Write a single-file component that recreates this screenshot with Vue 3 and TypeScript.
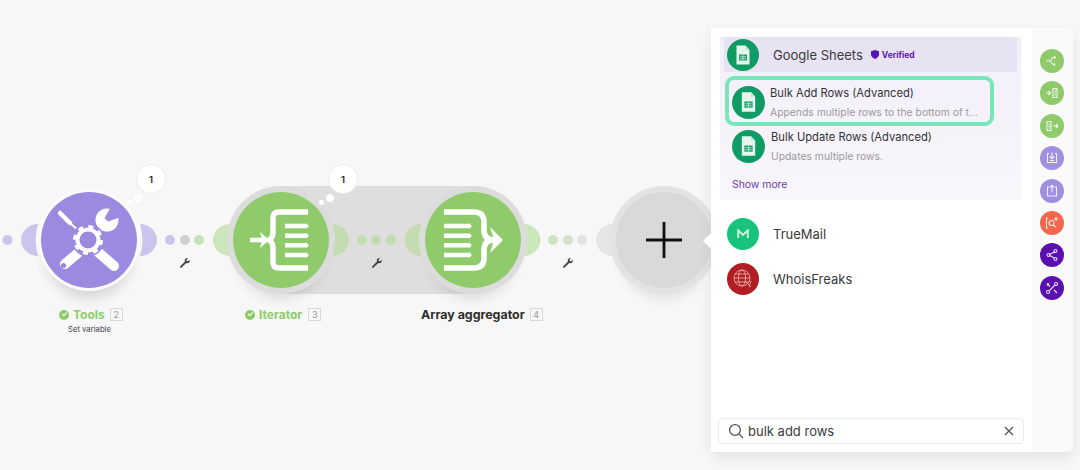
<template>
  <div class="page">
    <div class="band"></div>

    <svg class="links" width="710" height="470" viewBox="0 0 710 470">
      <path
        v-for="w in wings"
        :key="w.x + w.side"
        :d="wingPath(w.x, w.side)"
        :fill="w.color"
      />
      <circle v-for="d in dots" :key="d.x" :cx="d.x" cy="240" r="5" :fill="d.color" />
      <g v-for="x in wrenchXs" :key="x" :transform="`translate(${x - 5.500} 257.500)`" fill="#444">
        <path d="M1 11.2 7 5.2a3.2 3.2 0 0 1 .6-3.6A3.3 3.3 0 0 1 11 .8L9 2.8l.3 1.8 1.8.3 2-2a3.3 3.3 0 0 1-.8 3.4 3.2 3.2 0 0 1-3.6.6l-6 6a1.2 1.2 0 0 1-1.7-1.7Z" transform="scale(.78)" />
      </g>
    </svg>

    <div class="node tools">
      <svg width="96" height="96" viewBox="0 0 96 96">
        <g fill="none" stroke="#fff" stroke-linecap="round">
          <path d="M19 21l10 10" stroke-width="4.500" />
          <path d="M29 31l10 9" stroke-width="2" />
          <path d="M57 60l16 14" stroke-width="10" />
          <path d="M37 61 24 72" stroke-width="10" />
          <path d="M57 38l8-9" stroke-width="7" />
        </g>
        <circle cx="66" cy="28" r="11.500" fill="#fff" />
        <polygon points="63.500,26 67,29.500 80,25 71,13" fill="#9c8ae0" />
        <circle cx="22.500" cy="73.500" r="2.600" fill="#9c8ae0" />
        <circle cx="47" cy="48" r="16.500" fill="#9c8ae0" />
        <circle cx="47" cy="48" r="10.500" fill="none" stroke="#fff" stroke-width="4" />
        <circle cx="47" cy="48" r="13.500" fill="none" stroke="#fff" stroke-width="3" stroke-dasharray="5 5.600" />
      </svg>
    </div>
    <div class="node halo iterator">
      <svg width="96" height="96" viewBox="0 0 96 96">
        <g fill="none" stroke="#fff">
          <path d="M75 20H46q-6 0-6 6v14q0 6-4 8 4 2 4 8v14q0 6 6 6h29" stroke-width="5.500" />
          <path d="M52 34h21M52 43.700h21M52 53.300h21M52 63h21" stroke-width="4.500" />
          <path d="M17 48h13" stroke-width="4.500" />
        </g>
        <polygon points="27,40 36,48 27,56 29,48" fill="#fff" />
        <path d="M73 31l3 3-3 3ZM73 40.700l3 3-3 3ZM73 50.300l3 3-3 3ZM73 60l3 3-3 3Z" fill="#fff" />
      </svg>
    </div>
    <div class="node halo aggregator">
      <svg width="96" height="96" viewBox="0 0 96 96">
        <g fill="none" stroke="#fff">
          <path d="M19 20h30q10 0 10 10v8q0 10 10 10M19 76h30q10 0 10-10v-8q0-10 10-10" stroke-width="5.500" />
          <path d="M19 34h25M19 43.700h25M19 53.300h25M19 63h25" stroke-width="4.500" />
        </g>
        <polygon points="65,35 78,48 65,61 69,48" fill="#fff" />
        <path d="M44 31l3 3-3 3ZM44 40.700l3 3-3 3ZM44 50.300l3 3-3 3ZM44 60l3 3-3 3Z" fill="#fff" />
      </svg>
    </div>
    <div class="node plus-node">
      <svg width="36" height="36" viewBox="0 0 36 36">
        <path d="M18 0v36M0 18h36" stroke="#111" stroke-width="2.800" />
      </svg>
    </div>

    <div v-for="b in bubbles" :key="b" class="bubble-group" :style="{ left: b + 'px' }">
      <span class="puff small"></span>
      <span class="puff mid"></span>
      <span class="bubble">1</span>
    </div>

    <div class="label tools-label">
      <span class="check"></span><span class="name green">Tools</span><span class="badge">2</span>
    </div>
    <div class="sublabel">Set variable</div>
    <div class="label iterator-label">
      <span class="check"></span><span class="name green">Iterator</span><span class="badge">3</span>
    </div>
    <div class="label aggregator-label">
      <span class="name dark">Array aggregator</span><span class="badge">4</span>
    </div>

    <aside class="panel">
      <div class="panel-main">
        <span class="pointer"></span>
        <section class="group">
          <div class="group-head">
            <span class="app-icon sheets big">
              <svg width="32" height="32" viewBox="0 0 32 32">
                <path d="M9.500 6.500h9l4 4.500v14.500h-13Z" fill="#e6f6ee" />
                <path d="M18.500 6.500v4.500h4Z" fill="#bfe6d2" />
                <path d="M12 15.500h8v6h-8Z" fill="#1b9d68" />
                <path d="M12.800 17.700h6.400M12.800 19.700h6.400M16 16v5.200" stroke="#d8f1e4" stroke-width=".7" />
              </svg>
            </span>
            <span class="app-name">Google Sheets</span>
            <svg class="shield" width="8" height="9" viewBox="0 0 8 9">
              <path d="M4 0l4 1.200v3C8 6.600 6 8.200 4 9 2 8.200 0 6.600 0 4.200v-3Z" fill="#5a14b4" />
            </svg>
            <span class="verified">Verified</span>
          </div>
          <div v-for="m in modules" :key="m.title" class="module" :class="{ selected: m.selected }">
            <span class="app-icon sheets">
              <svg width="34" height="34" viewBox="0 0 32 32">
                <path d="M9.500 6.500h9l4 4.500v14.500h-13Z" fill="#e6f6ee" />
                <path d="M18.500 6.500v4.500h4Z" fill="#bfe6d2" />
                <path d="M12 15.500h8v6h-8Z" fill="#1b9d68" />
                <path d="M12.800 17.700h6.400M12.800 19.700h6.400M16 16v5.200" stroke="#d8f1e4" stroke-width=".7" />
              </svg>
            </span>
            <div class="module-text">
              <div class="module-title">{{ m.title }}</div>
              <div class="module-sub">{{ m.sub }}</div>
            </div>
          </div>
          <a class="show-more">Show more</a>
        </section>

        <div class="app-row">
          <span class="app-icon truemail">
            <svg width="12" height="10" viewBox="0 0 12 10">
              <path d="M1.200 9V1.400L6 6l4.800-4.600V9" fill="none" stroke="#d8f7e8" stroke-width="1.900" />
            </svg>
          </span>
          <span class="app-name">TrueMail</span>
        </div>
        <div class="app-row">
          <span class="app-icon whois">
            <svg width="24" height="24" viewBox="0 0 24 24" fill="none" stroke="#f0b9b4" stroke-width=".8">
              <circle cx="11" cy="11" r="8" />
              <ellipse cx="11" cy="11" rx="3.600" ry="8" />
              <path d="M3 11h16M4.200 7h13.600M4.200 15h13.600M14 14l6 6M20 14l-2 6" />
            </svg>
          </span>
          <span class="app-name">WhoisFreaks</span>
        </div>

        <div class="search">
          <svg width="16" height="16" viewBox="0 0 16 16" fill="none" stroke="#555" stroke-width="1.300">
            <circle cx="7" cy="7" r="5.400" />
            <path d="M11 11l4 4" />
          </svg>
          <span class="query">bulk add rows</span>
          <svg class="clear" width="10" height="10" viewBox="0 0 10 10">
            <path d="M1 1l8 8M9 1 1 9" stroke="#555" stroke-width="1.300" />
          </svg>
        </div>
      </div>

      <nav class="strip">
        <span v-for="t in tools" :key="t.d" class="tool" :style="{ background: t.color }">
          <svg width="14" height="14" viewBox="0 0 14 14" fill="none" stroke="#fff" stroke-opacity=".85" stroke-width="1.100">
            <path :d="t.d" />
          </svg>
        </span>
      </nav>
    </aside>
  </div>
</template>

<script setup lang="ts">
interface Wing {
  x: number
  side: 1 | -1
  color: string
}

const wings: Wing[] = [
  { x: 89, side: -1, color: '#cbc4ec' },
  { x: 89, side: 1, color: '#cbc4ec' },
  { x: 281, side: -1, color: '#cbe6ba' },
  { x: 281, side: 1, color: '#c3dcb2' },
  { x: 472.5, side: -1, color: '#c3dcb2' },
  { x: 472.5, side: 1, color: '#cbe6ba' },
  { x: 664, side: -1, color: '#e5e5e5' }
]

const dots = [
  { x: 7.5, color: '#cbc4ec' },
  { x: 170, color: '#cbc4ec' },
  { x: 185, color: '#cfcfcf' },
  { x: 199, color: '#c8e2b8' },
  { x: 362, color: '#c3dcb2' },
  { x: 376, color: '#c3dcb2' },
  { x: 391, color: '#c3dcb2' },
  { x: 553, color: '#cfe4c0' },
  { x: 568, color: '#d5e2cb' },
  { x: 582, color: '#e2e2e2' }
]

const wrenchXs = [185, 377, 568]
const bubbles = [137, 329]

const modules = [
  { title: 'Bulk Add Rows (Advanced)', sub: 'Appends multiple rows to the bottom of t...', selected: true },
  { title: 'Bulk Update Rows (Advanced)', sub: 'Updates multiple rows.', selected: false }
]

const tools = [
  { color: '#8fcb6b', d: 'M1 7h4l3-3.500h2M5 7l3 3.500h2M9.500 2v3M11 3.500H8M9.500 9v3' },
  { color: '#8fcb6b', d: 'M1 7h4M3.500 5 5.500 7l-2 2M8 2.500h4v9H8ZM9.500 5H11M9.500 7H11M9.500 9H11' },
  { color: '#8fcb6b', d: 'M2 2.500h4v9H2ZM3.500 5H5M3.500 7H5M3.500 9H5M8 7h5M11 5l2 2-2 2' },
  { color: '#a08ee0', d: 'M4 2.500H2.500v9h9v-9H10M7 1.500v6M4.800 5.500 7 7.700l2.200-2.200M5 9.500h4' },
  { color: '#a08ee0', d: 'M4 3H2.500v9h9V3H10M7 8.500v-7M4.800 3.500 7 1.300l2.200 2.200' },
  { color: '#f4674f', d: 'M3 2H1.500v10H3M6.500 4.500a2.500 2.500 0 1 1 0 5 2.500 2.500 0 0 1 0-5ZM8.500 9l2 2M11 1v4M9 3h4' },
  { color: '#5a0fb0', d: 'M4 7l6-3.500M4 7l6 3.500M5 7a1.500 1.500 0 1 1-3 0 1.500 1.500 0 0 1 3 0ZM12 3a1.500 1.500 0 1 1-3 0 1.500 1.500 0 0 1 3 0ZM12 11a1.500 1.500 0 1 1-3 0 1.500 1.500 0 0 1 3 0Z' },
  { color: '#5a0fb0', d: 'M4.500 9.500l5-5M4.500 11a1.500 1.500 0 1 1-3 0 1.500 1.500 0 0 1 3 0ZM12.500 3a1.500 1.500 0 1 1-3 0 1.500 1.500 0 0 1 3 0ZM2 2.500l3 3M2 4.500l2-2M9 9l3 3' }
]

// crescent on either side of a module, its tips sit on the halo circle
function wingPath(cx: number, side: 1 | -1): string {
  const tip = cx + side * 51
  const sweepOut = side === 1 ? 1 : 0
  const sweepIn = side === 1 ? 0 : 1
  return `M${tip} 224 A17 16 0 0 ${sweepOut} ${tip} 256 A54 54 0 0 ${sweepIn} ${tip} 224Z`
}
</script>

<style scoped>
.page {
  position: relative;
  width: 1080px;
  height: 470px;
  overflow: hidden;
  background: #f7f7f7;
  font-family: Inter, 'Liberation Sans', sans-serif;
  color: #333;
}

/* diagram canvas */
.band {
  position: absolute;
  left: 281px;
  top: 186px;
  width: 191.500px;
  height: 108px;
  background: #dedede;
}
.links {
  position: absolute;
  left: 0;
  top: 0;
}
.node {
  position: absolute;
  top: 192px;
  width: 96px;
  height: 96px;
  border-radius: 50%;
  display: flex;
  align-items: center;
  justify-content: center;
}
.tools {
  left: 41px;
  background: #9c8ae0;
  box-shadow: 0 0 0 3px #fbfbfb, 0 16px 14px -6px rgba(0, 0, 0, 0.14);
}
.halo {
  background: #8fcb6b;
  box-shadow: 0 0 0 6px #dcdcdc, 0 16px 14px -6px rgba(0, 0, 0, 0.12);
}
.iterator {
  left: 233px;
}
.aggregator {
  left: 424.500px;
}
.plus-node {
  left: 616px;
  background: #d9d9d9;
  box-shadow: 0 0 0 6px #e3e3e3, 0 16px 14px -6px rgba(0, 0, 0, 0.1);
}
.bubble-group {
  position: absolute;
  top: 165px;
  width: 28px;
  height: 42px;
}
.bubble {
  position: absolute;
  left: 0;
  top: 0;
  width: 28px;
  height: 28px;
  border-radius: 50%;
  background: #fff;
  box-shadow: 0 0 0 1px #ececec;
  font-size: 9.500px;
  font-weight: 600;
  color: #222;
  display: flex;
  align-items: center;
  justify-content: center;
}
.puff {
  position: absolute;
  border-radius: 50%;
  background: #fff;
}
.puff.mid {
  left: -3px;
  top: 29px;
  width: 8px;
  height: 8px;
}
.puff.small {
  left: -10px;
  top: 35px;
  width: 5px;
  height: 5px;
}
.label {
  position: absolute;
  top: 307px;
  height: 15px;
  display: flex;
  align-items: center;
  white-space: nowrap;
}
.tools-label {
  left: 59px;
}
.iterator-label {
  left: 245px;
}
.aggregator-label {
  left: 421px;
}
.check {
  width: 10px;
  height: 10px;
  border-radius: 50%;
  background: #8fcb6b;
  margin-right: 4px;
  position: relative;
}
.check::after {
  content: '';
  position: absolute;
  left: 2.500px;
  top: 2.200px;
  width: 4px;
  height: 2px;
  border-left: 1.300px solid #fff;
  border-bottom: 1.300px solid #fff;
  transform: rotate(-45deg);
}
.name {
  font-size: 12px;
  font-weight: 700;
}
.name.green {
  color: #8fcb6b;
}
.name.dark {
  color: #2e2e2e;
  font-size: 12.400px;
}
.badge {
  width: 13px;
  height: 13px;
  margin-left: 5px;
  border: 1px solid #d8d8d8;
  box-sizing: border-box;
  font-size: 9px;
  color: #999;
  display: flex;
  align-items: center;
  justify-content: center;
}
.iterator-label .badge {
  margin-left: 6px;
}
.sublabel {
  position: absolute;
  left: 68px;
  top: 324px;
  font-size: 7.700px;
  line-height: 11px;
  color: #444;
}

/* module picker */
.panel {
  position: absolute;
  left: 711px;
  top: 28px;
  height: 424px;
  display: flex;
  border-radius: 0 6px 6px 0;
  box-shadow: 0 6px 14px rgba(0, 0, 0, 0.08);
}
.panel-main {
  position: relative;
  width: 321px;
  box-sizing: border-box;
  padding: 9px 8px 8px 7px;
  background: #fff;
  display: flex;
  flex-direction: column;
}
.pointer {
  position: absolute;
  left: -8px;
  top: 205px;
  border: 8px solid transparent;
  border-left-width: 0;
  border-right-color: #fff;
}
.group {
  height: 163px;
  margin-left: 2px;
  margin-right: 3px;
  margin-bottom: 11px;
  background: linear-gradient(#f3effa, #f8f5fb);
  position: relative;
}
.group-head {
  height: 35px;
  margin-left: 4px;
  margin-right: 4px;
  background: #e8e3f3;
  display: flex;
  align-items: center;
}
.app-icon {
  flex: none;
  width: 32px;
  height: 32px;
  border-radius: 50%;
  display: flex;
  align-items: center;
  justify-content: center;
}
.sheets {
  background: #109a64;
}
.sheets.big {
  margin-left: 3px;
}
.app-name {
  margin-left: 14px;
  font-size: 13px;
  color: #3a3a3a;
}
.shield {
  margin-left: 8px;
}
.verified {
  margin-left: 3px;
  font-size: 8.500px;
  font-weight: 700;
  color: #5a14b4;
}
.module {
  height: 40px;
  margin-left: 5px;
  width: 269px;
  box-sizing: border-box;
  display: flex;
  align-items: center;
  gap: 6px;
  padding-left: 7px;
}
.module .app-icon {
  width: 33px;
  height: 33px;
}
.module.selected {
  margin-top: 4px;
  height: 50px;
  border: 4px solid #78e6b8;
  border-radius: 9px;
  padding-left: 3px;
  padding-top: 2px;
  gap: 5px;
}
.module-text {
  display: flex;
  flex-direction: column;
  gap: 5px;
  padding-top: 1px;
}
.module-title {
  font-size: 11.200px;
  line-height: 14px;
  color: #333;
}
.module-sub {
  font-size: 10.350px;
  line-height: 14px;
  color: #9a9a9a;
  white-space: nowrap;
}
.show-more {
  display: block;
  margin: 12px 0 0 12px;
  font-size: 10.400px;
  line-height: 14px;
  color: #6a3ea8;
}
.app-row {
  height: 45px;
  display: flex;
  align-items: center;
  margin-left: 9px;
}
.truemail {
  background: #18c47c;
}
.whois {
  background: #b01e24;
}
.search {
  margin-top: auto;
  height: 26px;
  box-sizing: border-box;
  border: 1px solid #ececec;
  border-radius: 4px;
  background: #fff;
  display: flex;
  align-items: center;
  padding: 0 9px;
}
.query {
  margin-left: 4px;
  font-size: 13px;
  color: #3a3a3a;
}
.clear {
  margin-left: auto;
}
.strip {
  width: 41px;
  background: #fafafa;
  border-radius: 0 6px 6px 0;
  display: flex;
  flex-direction: column;
  gap: 8.400px;
  padding-top: 21px;
  box-sizing: border-box;
  align-items: flex-start;
}
.tool {
  width: 24px;
  height: 24px;
  margin-left: 8px;
  border-radius: 50%;
  display: flex;
  align-items: center;
  justify-content: center;
}
</style>
